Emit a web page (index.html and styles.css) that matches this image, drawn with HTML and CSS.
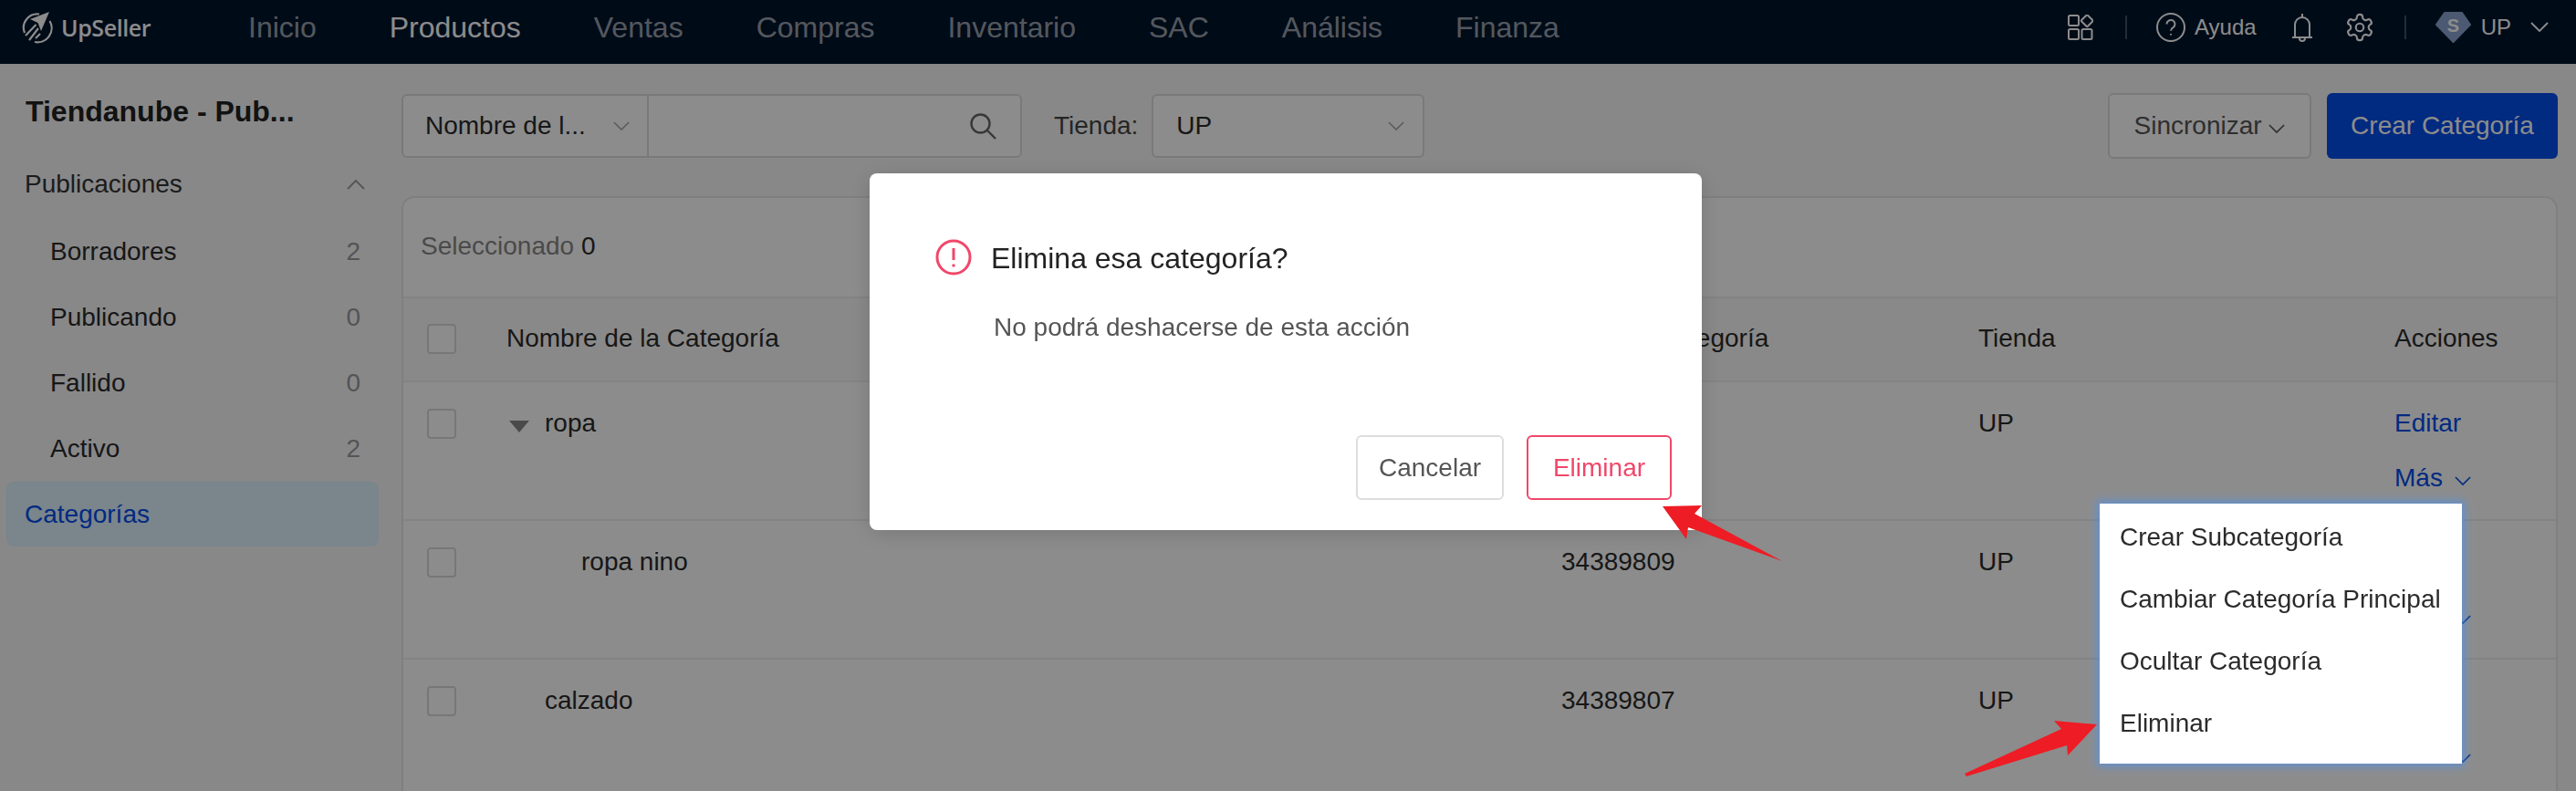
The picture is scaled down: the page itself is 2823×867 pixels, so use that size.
FILE: index.html
```html
<!DOCTYPE html>
<html lang="en">
<head>
    <meta charset="UTF-8">
    <title>UpSeller - Categorías</title>
    <link rel="stylesheet" href="styles.css">
</head>
<body>
    <!-- Top navigation -->
    <header class="topbar">
        <div class="logo">
            <svg class="logo-mark" viewBox="0 0 36 36" width="36" height="36">
                <path class="logo-ring" d="M20 3.500A15 15 0 0 0 4 24"/>
                <path class="logo-ring" d="M31.500 11A15.500 15.500 0 0 1 15 34"/>
                <polygon class="logo-plane" points="31,1 10,9 18.500,13 22,22"/>
                <path class="logo-ring" d="M16.500 15L5 27M19 19L9 32M21 25L16 30"/>
            </svg>
            <span class="logo-text">UpSeller</span>
        </div>
        <nav class="menu">
            <a>Inicio</a>
            <a class="active">Productos</a>
            <a>Ventas</a>
            <a>Compras</a>
            <a>Inventario</a>
            <a>SAC</a>
            <a>Análisis</a>
            <a>Finanza</a>
        </nav>
        <div class="topbar-right">
            <svg class="ico" viewBox="0 0 28 28" width="28" height="28">
                <rect x="1" y="1" width="11" height="11" rx="1.500"/>
                <rect x="1" y="16" width="11" height="11" rx="1.500"/>
                <rect x="15.500" y="16" width="11" height="11" rx="1.500"/>
                <rect x="16.500" y="2" width="9.500" height="9.500" rx="1" transform="rotate(45 21.200 6.700)"/>
            </svg>
            <span class="sep"></span>
            <svg class="ico" viewBox="0 0 32 32" width="32" height="32">
                <circle cx="16" cy="16" r="15"/>
                <path d="M11.500 12.500a4.500 4.500 0 1 1 7 3.700c-1.600 1-2.500 1.800-2.500 3.600"/>
                <path d="M16 23v1.500"/>
            </svg>
            <span class="help-text">Ayuda</span>
            <svg class="ico bell" viewBox="0 0 24 32" width="24" height="32">
                <path d="M4 27V13a8 8 0 0 1 16 0v14"/>
                <path d="M1 27h22M12 1v4M9 28a3 3 0 0 0 6 0"/>
            </svg>
            <svg class="ico gear" viewBox="0 0 24 24" width="34" height="34">
                <path d="M12.220 2h-.44a2 2 0 0 0-2 2v.18a2 2 0 0 1-1 1.730l-.43.25a2 2 0 0 1-2 0l-.15-.08a2 2 0 0 0-2.730.73l-.22.38a2 2 0 0 0 .73 2.730l.15.1a2 2 0 0 1 1 1.720v.51a2 2 0 0 1-1 1.740l-.15.09a2 2 0 0 0-.73 2.730l.22.38a2 2 0 0 0 2.730.73l.15-.08a2 2 0 0 1 2 0l.43.25a2 2 0 0 1 1 1.730V20a2 2 0 0 0 2 2h.44a2 2 0 0 0 2-2v-.18a2 2 0 0 1 1-1.730l.43-.25a2 2 0 0 1 2 0l.15.08a2 2 0 0 0 2.730-.73l.22-.39a2 2 0 0 0-.73-2.730l-.15-.08a2 2 0 0 1-1-1.740v-.5a2 2 0 0 1 1-1.740l.15-.09a2 2 0 0 0 .73-2.730l-.22-.38a2 2 0 0 0-2.730-.73l-.15.08a2 2 0 0 1-2 0l-.43-.25a2 2 0 0 1-1-1.730V4a2 2 0 0 0-2-2z"/>
                <circle cx="12" cy="12" r="3"/>
            </svg>
            <span class="sep"></span>
            <svg class="badge" viewBox="0 0 39 34" width="39" height="34">
                <polygon points="10,1 29,1 38,14 19.500,33 1,14"/>
                <text x="19.500" y="22" text-anchor="middle">S</text>
            </svg>
            <span class="user-name">UP</span>
            <svg class="chev user-chev" viewBox="0 0 20 12" width="20" height="12"><polyline points="1,1 10,10 19,1"/></svg>
        </div>
    </header>

    <div class="layout">
        <!-- Sidebar -->
        <aside class="sidebar">
            <div class="side-title">Tiendanube - Pub...</div>
            <div class="side-group">
                <span>Publicaciones</span>
                <svg class="chev side-chev" viewBox="0 0 20 12" width="20" height="12"><polyline points="1,11 10,2 19,11"/></svg>
            </div>
            <ul class="side-list">
                <li class="side-item"><span>Borradores</span><span class="count">2</span></li>
                <li class="side-item"><span>Publicando</span><span class="count">0</span></li>
                <li class="side-item"><span>Fallido</span><span class="count">0</span></li>
                <li class="side-item"><span>Activo</span><span class="count">2</span></li>
                <li class="side-link">Categorías</li>
            </ul>
        </aside>

        <main class="content">
            <!-- Filter bar -->
            <div class="toolbar">
                <div class="search">
                    <div class="search-type">
                        <span>Nombre de l...</span>
                        <svg class="chev" viewBox="0 0 20 12" width="18" height="11"><polyline points="1,1 10,10 19,1"/></svg>
                    </div>
                    <div class="search-input">
                        <svg class="search-ico" viewBox="0 0 32 32" width="32" height="32">
                            <circle cx="13.500" cy="13.500" r="10"/>
                            <path d="M21 21l9 9"/>
                        </svg>
                    </div>
                </div>
                <span class="store-label">Tienda:</span>
                <div class="store-select">
                    <span>UP</span>
                    <svg class="chev" viewBox="0 0 20 12" width="18" height="11"><polyline points="1,1 10,10 19,1"/></svg>
                </div>
                <button class="btn btn-sync">Sincronizar <svg class="chev" viewBox="0 0 20 12" width="18" height="11"><polyline points="1,1 10,10 19,1"/></svg></button>
                <button class="btn btn-primary">Crear Categoría</button>
            </div>

            <!-- Category table -->
            <section class="card">
                <div class="selected">Seleccionado <b>0</b></div>
                <div class="row row-head">
                    <span class="check"></span>
                    <span>Nombre de la Categoría</span>
                    <span>ID de la Categoría</span>
                    <span>Tienda</span>
                    <span>Acciones</span>
                </div>
                <div class="row">
                    <span class="check"></span>
                    <span class="name"><i class="caret"></i>ropa</span>
                    <span></span>
                    <span>UP</span>
                    <span class="actions"><a>Editar</a><a>Más<svg class="chev" viewBox="0 0 20 12" width="18" height="11"><polyline points="1,1 10,10 19,1"/></svg></a></span>
                </div>
                <div class="row">
                    <span class="check"></span>
                    <span class="name name-sub">ropa nino</span>
                    <span>34389809</span>
                    <span>UP</span>
                    <span class="actions"><a>Editar</a><a>Más<svg class="chev" viewBox="0 0 20 12" width="18" height="11"><polyline points="1,1 10,10 19,1"/></svg></a></span>
                </div>
                <div class="row">
                    <span class="check"></span>
                    <span class="name name-top">calzado</span>
                    <span>34389807</span>
                    <span>UP</span>
                    <span class="actions"><a>Editar</a><a>Más<svg class="chev" viewBox="0 0 20 12" width="18" height="11"><polyline points="1,1 10,10 19,1"/></svg></a></span>
                </div>
            </section>
        </main>
    </div>

    <div class="overlay"></div>

    <!-- Confirm dialog -->
    <div class="modal">
        <div class="modal-head">
            <svg class="warn" viewBox="0 0 40 40" width="40" height="40">
                <circle cx="20" cy="20" r="18"/>
                <path d="M20 10v13M20 27.500v3"/>
            </svg>
            <span class="modal-title">Elimina esa categoría?</span>
        </div>
        <p class="modal-text">No podrá deshacerse de esta acción</p>
        <div class="modal-foot">
            <button class="btn btn-cancel">Cancelar</button>
            <button class="btn btn-danger">Eliminar</button>
        </div>
    </div>

    <!-- Actions menu -->
    <ul class="dropdown">
        <li>Crear Subcategoría</li>
        <li>Cambiar Categoría Principal</li>
        <li>Ocultar Categoría</li>
        <li>Eliminar</li>
    </ul>

    <!-- Red annotation arrows -->
    <svg class="arrow arrow-modal" viewBox="0 0 132 62" width="132" height="62">
        <polygon points="0,1 43,0 35,9 131,61 28,24 26,37"/>
    </svg>
    <svg class="arrow arrow-menu" viewBox="0 0 146 62" width="146" height="62">
        <polygon points="145,5 98,1 106,10 0,59 2,62 112,28 113,39"/>
    </svg>
</body>
</html>
```

FILE: styles.css
```css
/* Basic page */
* {
    box-sizing: border-box;
}

body {
    margin: 0;
    height: 867px;
    overflow: hidden;
    font-family: "Liberation Sans", Arial, sans-serif;
    font-size: 28px;
    line-height: 36px;
    color: #2b2b2b;
    background: #f8f8f9;
}

ul {
    list-style: none;
    margin: 0;
    padding: 0;
}

.chev {
    fill: none;
    stroke: currentColor;
    stroke-width: 1.8;
}

/* Top navigation */
.topbar {
    display: flex;
    align-items: center;
    height: 70px;
    padding: 0 30px 10px 23px;
    background: #00152d;
    color: #fff;
}

.logo {
    display: flex;
    align-items: center;
    gap: 8px;
    width: 249px;
}

.logo-ring {
    fill: none;
    stroke: #fff;
    stroke-width: 2.2;
}

.logo-plane {
    fill: #fff;
}

.logo-text {
    font-family: "Open Sans", sans-serif;
    font-size: 25px;
    font-weight: 600;
    letter-spacing: -0.4px;
}

.menu {
    display: flex;
    gap: 80px;
    font-size: 32px;
}

.menu a {
    color: rgba(255, 255, 255, 0.62);
}

.menu a.active {
    color: #fff;
}

.topbar-right {
    display: flex;
    align-items: center;
    margin-left: auto;
    font-size: 24px;
}

.ico {
    fill: none;
    stroke: #fff;
    stroke-width: 2;
    flex: none;
}

.gear {
    stroke-width: 1.500;
    margin: 0 -3px 0 34px;
}

.bell {
    margin-left: 38px;
}

.sep {
    width: 2px;
    height: 26px;
    margin: 0 32px 0 35px;
    background: rgba(255, 255, 255, 0.25);
}

.help-text {
    margin-left: 10px;
}

.badge polygon {
    fill: #8aa3cf;
    stroke: #8aa3cf;
    stroke-width: 2;
    stroke-linejoin: round;
}

.badge text {
    font-family: "Liberation Sans", Arial, sans-serif;
    font-size: 20px;
    font-weight: 700;
    fill: #fff;
}

.user-name {
    margin-left: 11px;
}

.user-chev {
    margin-left: 21px;
}

/* Sidebar */
.layout {
    display: flex;
}

.sidebar {
    flex: none;
    width: 440px;
    padding: 32px 25px 0 7px;
}

.side-title {
    height: 40px;
    margin: 0 0 23px 21px;
    font-size: 32px;
    line-height: 40px;
    font-weight: 700;
    color: #222;
}

.side-group {
    display: flex;
    justify-content: space-between;
    align-items: center;
    height: 72px;
    padding: 2px 15px 0 20px;
    color: #333;
}

.side-chev {
    color: #999;
}

.side-list {
    margin-top: 3px;
}

.side-item {
    display: flex;
    justify-content: space-between;
    align-items: center;
    height: 72px;
    padding: 0 20px 0 48px;
}

.count {
    color: #999;
}

.side-link {
    height: 71px;
    padding-left: 20px;
    line-height: 72px;
    color: #024dec;
    background: #dff2ff;
    border-radius: 8px;
}

/* Filter bar */
.content {
    flex: 1;
    padding: 33px 20px 0 0;
}

.toolbar {
    display: flex;
    align-items: center;
    height: 70px;
}

.search,
.store-select,
.btn-sync {
    border: 2px solid #ddd;
    border-radius: 6px;
    background: #fff;
}

.search {
    display: flex;
    width: 680px;
    height: 70px;
}

.search-type {
    display: flex;
    justify-content: space-between;
    align-items: center;
    width: 269px;
    padding: 0 19px 0 24px;
    border-right: 2px solid #ddd;
}

.search-type .chev,
.store-select .chev {
    color: #aaa;
}

.search-input {
    display: flex;
    justify-content: flex-end;
    align-items: center;
    flex: 1;
    padding-right: 25px;
}

.search-ico {
    fill: none;
    stroke: #666;
    stroke-width: 2.4;
}

.store-label {
    margin-left: 35px;
    color: #444;
}

.store-select {
    display: flex;
    justify-content: space-between;
    align-items: center;
    width: 299px;
    height: 70px;
    margin-left: 15px;
    padding: 0 20px 0 25px;
}

.btn {
    height: 72px;
    font: inherit;
    border-radius: 6px;
    cursor: pointer;
}

.btn-sync {
    width: 223px;
    margin-left: auto;
    color: #555;
}

.btn-primary {
    width: 253px;
    margin-left: 17px;
    color: #fff;
    background: #024dec;
    border: none;
}

/* Category table */
.card {
    height: 652px;
    margin-top: 42px;
    overflow: hidden;
    background: #fff;
    border: 2px solid #e8e8e8;
    border-bottom: none;
    border-radius: 14px 14px 0 0;
}

.selected {
    height: 108px;
    padding: 35px 0 0 19px;
    color: #888;
}

.selected b {
    font-weight: 400;
    color: #2b2b2b;
}

.row {
    display: grid;
    grid-template-columns: 113px 1156px 457px 456px 1fr;
    align-items: start;
    height: 152px;
    padding-top: 27px;
    border-top: 2px solid #eee;
}

.row-head {
    height: 92px;
    padding-top: 26px;
    background: #fafafa;
}

.check {
    width: 32px;
    height: 33px;
    margin: 2px 0 0 26px;
    border: 2px solid #d9d9d9;
    border-radius: 4px;
    background: #fff;
}

.name {
    display: flex;
    align-items: center;
}

.name-top {
    padding-left: 42px;
}

.name-sub {
    padding-left: 82px;
}

.caret {
    width: 0;
    height: 0;
    margin: 6px 17px 0 3px;
    border-left: 11px solid transparent;
    border-right: 11px solid transparent;
    border-top: 13px solid #888;
}

.actions {
    display: flex;
    flex-direction: column;
    gap: 24px;
    color: #024dec;
}

.actions .chev {
    margin-left: 13px;
}

/* Overlay and things above it */
.overlay {
    position: fixed;
    inset: 0;
    background: rgba(0, 0, 0, 0.45);
}

.modal {
    position: fixed;
    left: 953px;
    top: 190px;
    width: 912px;
    height: 391px;
    padding: 72px 33px 0 72px;
    background: #fff;
    border-radius: 8px;
    box-shadow: 0 4px 24px rgba(0, 0, 0, 0.15);
}

.modal-head {
    display: flex;
    align-items: center;
    gap: 21px;
    height: 40px;
    font-size: 32px;
    color: #222;
}

.modal-title {
    padding-top: 2px;
}

.warn {
    fill: none;
    stroke: #f0476a;
    stroke-width: 3;
}

.modal-text {
    margin: 39px 0 0 64px;
    color: #555;
}

.modal-foot {
    display: flex;
    justify-content: flex-end;
    gap: 25px;
    margin-top: 100px;
}

.modal-foot .btn {
    height: 71px;
}

.btn-cancel {
    width: 162px;
    color: #555;
    background: #fff;
    border: 2px solid #ddd;
}

.btn-danger {
    width: 159px;
    color: #f0476a;
    background: #fff;
    border: 2px solid #f0476a;
}

.dropdown {
    position: fixed;
    left: 2301px;
    top: 552px;
    width: 397px;
    height: 285px;
    padding-top: 3px;
    background: #fff;
    box-shadow: 0 0 9px 3px rgba(85, 145, 225, 0.8);
}

.dropdown li {
    height: 68px;
    padding-left: 22px;
    line-height: 68px;
}

.arrow {
    position: fixed;
    fill: #ee1c25;
}

.arrow-modal {
    left: 1822px;
    top: 554px;
}

.arrow-menu {
    left: 2153px;
    top: 789px;
}
```
